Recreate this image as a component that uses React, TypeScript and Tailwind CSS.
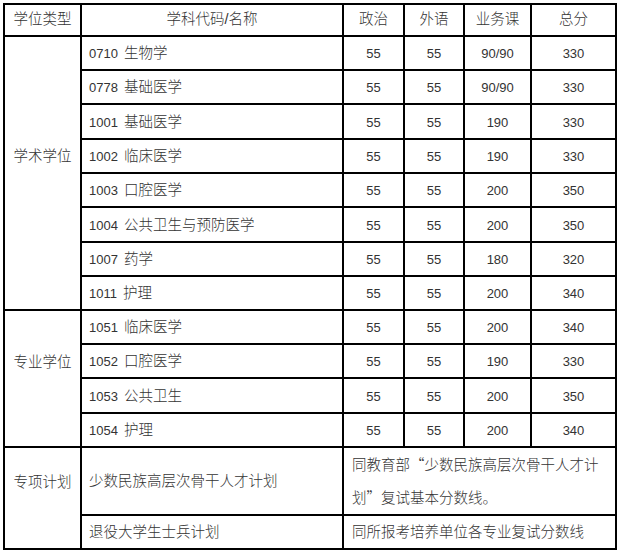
const academic = [
  ["0710", "生物学", "55", "55", "90/90", "330"],
  ["0778", "基础医学", "55", "55", "90/90", "330"],
  ["1001", "基础医学", "55", "55", "190", "330"],
  ["1002", "临床医学", "55", "55", "190", "330"],
  ["1003", "口腔医学", "55", "55", "200", "350"],
  ["1004", "公共卫生与预防医学", "55", "55", "200", "350"],
  ["1007", "药学", "55", "55", "180", "320"],
  ["1011", "护理", "55", "55", "200", "340"],
]

const professional = [
  ["1051", "临床医学", "55", "55", "200", "340"],
  ["1052", "口腔医学", "55", "55", "190", "330"],
  ["1053", "公共卫生", "55", "55", "200", "350"],
  ["1054", "护理", "55", "55", "200", "340"],
]

const cell = "border-2 border-black"
const num = "border-2 border-black text-center text-[13px]"
const quote = "font-['Noto_Sans_CJK_SC',sans-serif] [font-feature-settings:'fwid']"

function SubjectRows({ label, rows }: { label: string; rows: string[][] }) {
  return (
    <>
      {rows.map((r, i) => (
        <tr key={r[0]} className={i % 3 === 2 ? "h-[35px]" : "h-[34px]"}>
          {i === 0 && (
            <td rowSpan={rows.length} className={`${cell} text-center align-middle pb-[32px]`}>
              {label}
            </td>
          )}
          <td className={`${cell} pl-[7px] pt-[2px]`}>
            <span className="text-[13px] mr-[6px]">{r[0]}</span>
            {r[1]}
          </td>
          <td className={`${num} pt-[2px]`}>{r[2]}</td>
          <td className={`${num} pt-[2px]`}>{r[3]}</td>
          <td className={`${num} pt-[2px]`}>{r[4]}</td>
          <td className={`${num} pt-[2px]`}>{r[5]}</td>
        </tr>
      ))}
    </>
  )
}

export default function App() {
  return (
    <div className="w-[620px] h-[551px] bg-white pt-[3px] pl-[3px] text-[#333] font-['Liberation_Sans','Noto_Sans_CJK_SC',sans-serif] text-[14.5px] font-light">
      <table className="table-fixed border-collapse w-[614px]">
        <colgroup>
          <col className="w-[77px]" />
          <col className="w-[262px]" />
          <col className="w-[61px]" />
          <col className="w-[60px]" />
          <col className="w-[67px]" />
          <col className="w-[85px]" />
        </colgroup>
        <tbody>
          <tr className="h-[32px] text-center">
            <td className={cell}>学位类型</td>
            <td className={cell}>学科代码/名称</td>
            <td className={cell}>政治</td>
            <td className={cell}>外语</td>
            <td className={cell}>业务课</td>
            <td className={cell}>总分</td>
          </tr>
          <SubjectRows label="学术学位" rows={academic} />
          <SubjectRows label="专业学位" rows={professional} />
          <tr className="h-[66px]">
            <td rowSpan={2} className={`${cell} text-center align-middle pb-[30px]`}>专项计划</td>
            <td className={`${cell} pl-[7px] pt-[2px]`}>少数民族高层次骨干人才计划</td>
            <td colSpan={4} className={`${cell} pl-[8px] leading-[31px]`}>
              同教育部<span className={quote}>“</span>少数民族高层次骨干人才计
              <br />
              划<span className={quote}>”</span>复试基本分数线。
            </td>
          </tr>
          <tr className="h-[34px]">
            <td className={`${cell} pl-[7px] pt-[2px]`}>退役大学生士兵计划</td>
            <td colSpan={4} className={`${cell} pl-[8px] pt-[2px]`}>同所报考培养单位各专业复试分数线</td>
          </tr>
        </tbody>
      </table>
    </div>
  )
}
